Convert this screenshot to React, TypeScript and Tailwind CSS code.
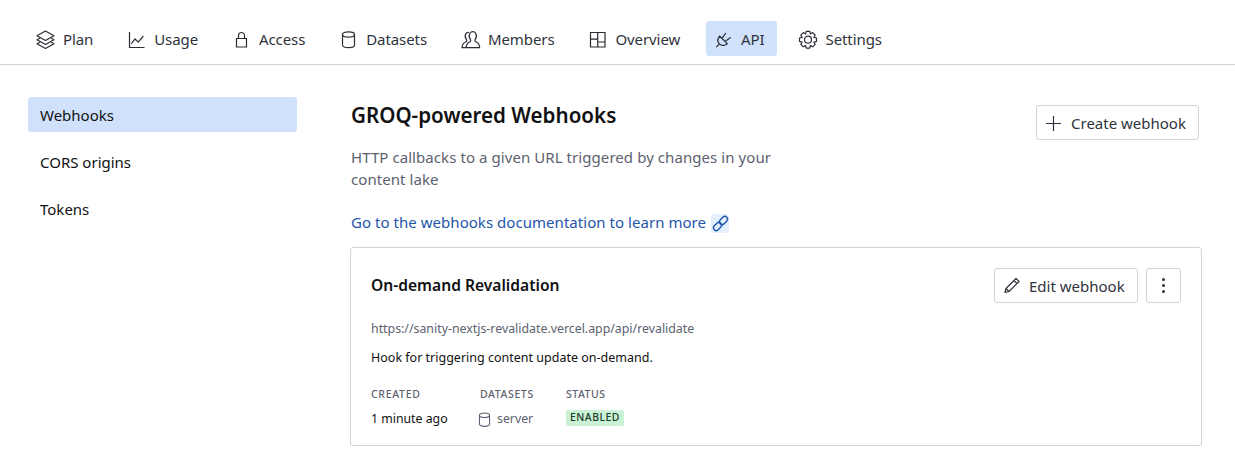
import React from "react";

const S = ({ children, className = "" }: { children: React.ReactNode; className?: string }) => (
  <svg viewBox="0 0 25 25" fill="none" stroke="currentColor" strokeWidth="1.2" className={className}>{children}</svg>
);

const icons: Record<string, React.ReactNode> = {
  Plan: <><path d="M12.5 4 21 8.8 12.5 13.6 4 8.8Z" strokeLinejoin="round" /><path d="M6.8 11.2 4 12.8 12.5 17.6 21 12.8 18.2 11.2" strokeLinejoin="round" /><path d="M6.8 15.2 4 16.8 12.5 21.5 21 16.8 18.2 15.2" strokeLinejoin="round" /></>,
  Usage: <><path d="M5.5 5V20.5H20.5" /><path d="M7.2 16.8 11 12 14.3 15.2 19.3 9" /></>,
  Access: <><path d="M7.5 11.5H17.5V20H7.5Z" /><path d="M9.5 11.5V8.5A3 3 0 0 1 15.5 8.5V11.5" /></>,
  Datasets: <><path d="M6.5 7.5C6.5 5.8 9.2 4.8 12.5 4.8S18.5 5.8 18.5 7.5V18C18.5 19.7 15.8 20.7 12.5 20.7S6.5 19.7 6.5 18Z" /><path d="M6.5 7.5C6.5 9.2 9.2 10.2 12.5 10.2S18.5 9.2 18.5 7.5" /></>,
  Members: <><path d="M8 20.7H4C4 17.3 5.3 16 7.6 15 8.8 14.4 9 13.4 8.2 12.2 7 10.4 7 8.2 7.8 6.8 8.6 5.6 9.8 5.2 11 5.5" /><path d="M21.6 20.7H8.2C8.2 17.3 9.5 16 11.6 15 12.8 14.4 13 13.4 12.2 12.2 11 10.4 11 7.8 12.1 6 13.3 4.2 16.3 4.2 17.5 6 18.6 7.8 18.6 10.4 17.4 12.2 16.6 13.4 16.8 14.4 18.2 15 20.3 16 21.6 17.3 21.6 20.7Z" strokeLinejoin="round" /></>,
  Overview: <><path d="M5.5 5.5H20V20H5.5Z" /><path d="M12.7 5.5V20M5.5 12.2H12.7M12.7 15H20" /></>,
  API: <><path d="M5.3 20.2 8.6 16.9" /><path d="M8.6 9 16.4 16.8 14 18C11.8 18.9 9.6 18.2 8.1 16.6 6.7 15 6.4 13 7.3 11.2Z" strokeLinejoin="round" /><path d="M11.2 11.2 14.8 6M14.4 14.2 19.5 10.6" /></>,
  Settings: <><circle cx="13" cy="12.7" r="3.5" /><path d="M11.2 4.3H14.8L15.4 6.9 17.7 5.6 20.2 8.1 18.9 10.3 21.5 11V14.4L18.9 15.1 20.2 17.3 17.7 19.8 15.4 18.5 14.8 21.1H11.2L10.6 18.5 8.3 19.8 5.8 17.3 7.1 15.1 4.5 14.4V11L7.1 10.3 5.8 8.1 8.3 5.6 10.6 6.9Z" strokeLinejoin="round" /></>,
};

const tabs = ["Plan", "Usage", "Access", "Datasets", "Members", "Overview", "API", "Settings"];

export default function App() {
  return (
    <div className="h-[476px] w-[1235px] overflow-hidden bg-white text-[15px] text-[#101112] font-['Noto_Sans',sans-serif]">
      <nav className="flex h-[65px] items-start gap-[13.9px] border-b border-[#ced2d9] pl-[28px] pt-[21px]">
        {tabs.map((t) => (
          <div key={t} className={`flex h-[35px] items-center gap-[5px] rounded-[3px] pl-[5px] pr-[12px] ${t === "API" ? "bg-[#d0e2fb]" : ""}`}>
            <S className="mt-[1px] h-[25px] w-[25px] text-[#2a2d33]">{icons[t]}</S>
            <span className="pt-[2px] tracking-[-0.08px] text-[#2f333c]">{t}</span>
          </div>
        ))}
      </nav>
      <div className="flex">
        <aside className="flex w-[350px] shrink-0 flex-col gap-[12px] pl-[28px] pt-[32px]">
          {["Webhooks", "CORS origins", "Tokens"].map((t, i) => (
            <div key={t} className={`flex h-[35px] w-[269px] items-center rounded-[3px] px-[12px] pt-[2px] ${i === 0 ? "bg-[#d0e2fb]" : ""}`}>{t}</div>
          ))}
        </aside>
        <main className="w-[852px] pt-[36px]">
          <div className="flex items-start justify-between pl-[1px] pr-[3px]">
            <div>
              <h1 className="text-[20.6px] font-semibold leading-[28px]">GROQ-powered Webhooks</h1>
              <p className="mt-[17px] w-[440px] text-[15px] leading-[22px] tracking-[0.07px] text-[#5c6270]">HTTP callbacks to a given URL triggered by changes in your content lake</p>
              <div className="mt-[21px] flex h-[22px] items-center gap-[5px] text-[#1e56a8]">
                <span className="tracking-[0.04px]">Go to the webhooks documentation to learn more</span>
                <span className="mt-[3px] flex h-[19px] w-[18px] items-center justify-center rounded-[3px] bg-[#e5effd]">
                  <svg viewBox="0 0 25 25" fill="none" stroke="currentColor" strokeWidth="1.6" className="h-[21px] w-[21px] shrink-0">
                    <rect x="10.5" y="5.75" width="11" height="6.5" rx="3.25" transform="rotate(-45 16 9)" />
                    <rect x="3.5" y="12.75" width="11" height="6.5" rx="3.25" transform="rotate(-45 9 16)" />
                  </svg>
                </span>
              </div>
            </div>
            <button className="mt-[4px] flex h-[35px] w-[163px] items-center gap-[5px] rounded-[3px] border border-[#ced2d9] pl-[4px] text-[#2f333c]">
              <svg viewBox="0 0 25 25" fill="none" stroke="currentColor" strokeWidth="1.2" className="mt-[1px] h-[25px] w-[25px]"><path d="M12.5 5V20M5 12.5H20" /></svg>
              <span className="pt-[2px]">Create webhook</span>
            </button>
          </div>
          <section className="mt-[14px] h-[199px] w-[852px] rounded-[3px] border border-[#ced2d9] px-[20px] pt-[20px]">
            <div className="flex items-start justify-between">
              <h2 className="pt-[5px] text-[15.6px] font-semibold leading-[24px]">On-demand Revalidation</h2>
              <div className="flex gap-[8px]">
                <button className="flex h-[35px] w-[144px] items-center gap-[4px] rounded-[3px] border border-[#ced2d9] pl-[5px] text-[#2f333c]">
                  <svg viewBox="0 0 25 25" fill="none" stroke="currentColor" strokeWidth="1.2" className="h-[25px] w-[25px]"><path d="M14 7.5 17 10.5M5 19.5 6 15.5 16 5.5 19 8.5 9 18.5Z" strokeLinejoin="round" /><path d="M6 15.5 9 18.5" /></svg>
                  <span className="pt-[2px]">Edit webhook</span>
                </button>
                <button className="flex h-[35px] w-[35px] items-center justify-center rounded-[3px] border border-[#ced2d9] text-[#2f333c]">
                  <svg viewBox="0 0 25 25" fill="currentColor" className="h-[25px] w-[25px]"><circle cx="12.5" cy="6.5" r="1.5" /><circle cx="12.5" cy="12.5" r="1.5" /><circle cx="12.5" cy="18.5" r="1.5" /></svg>
                </button>
              </div>
            </div>
            <p className="mt-[17px] text-[12.35px] leading-[18px] text-[#5c6270]">https://sanity-nextjs-revalidate.vercel.app/api/revalidate</p>
            <p className="mt-[11px] text-[12.5px] leading-[18px]">Hook for triggering content update on-demand.</p>
            <div className="mt-[20px] flex">
              <div className="w-[109px]">
                <div className="text-[10.5px] font-medium leading-[14px] tracking-[0.7px] text-[#5c6270]">CREATED</div>
                <div className="mt-[9px] text-[12.3px] leading-[18px]">1 minute ago</div>
              </div>
              <div className="w-[86px]">
                <div className="text-[10.5px] font-medium leading-[14px] tracking-[0.6px] text-[#5c6270]">DATASETS</div>
                <div className="mt-[9px] flex h-[18px] items-center gap-[2.5px] text-[12.3px] text-[#5c6270]">
                  <svg viewBox="0 0 25 25" fill="none" stroke="currentColor" strokeWidth="1.3" className="-ml-[6.5px] h-[21px] w-[21px] shrink-0"><path d="M6.5 7.5C6.5 5.8 9.2 4.8 12.5 4.8S18.5 5.8 18.5 7.5V18C18.5 19.7 15.8 20.7 12.5 20.7S6.5 19.7 6.5 18Z" /><path d="M6.5 7.5C6.5 9.2 9.2 10.2 12.5 10.2S18.5 9.2 18.5 7.5" /></svg>
                  server
                </div>
              </div>
              <div>
                <div className="text-[10.5px] font-medium leading-[14px] tracking-[0.5px] text-[#5c6270]">STATUS</div>
                <div className="mt-[9px] inline-flex h-[16px] items-center rounded-[2px] bg-[#c9f1d6] px-[4px] text-[10.4px] font-medium tracking-[0.5px] text-[#1c3a28]">ENABLED</div>
              </div>
            </div>
          </section>
        </main>
      </div>
    </div>
  );
}
